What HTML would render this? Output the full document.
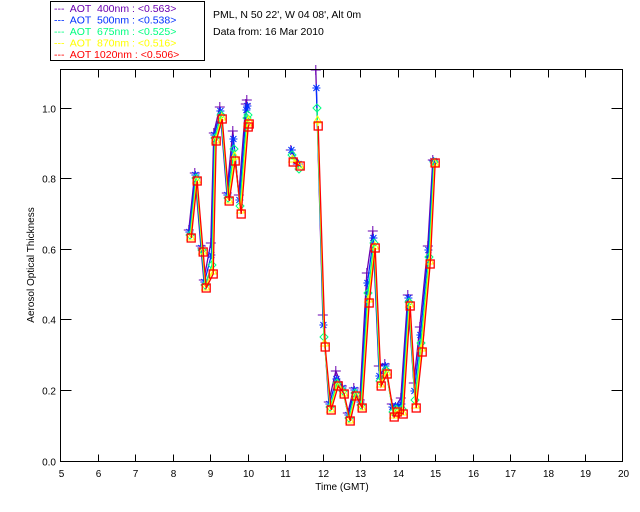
<!DOCTYPE html>
<html><head><meta charset="utf-8"><style>
body{margin:0;background:#fff;width:640px;height:512px;overflow:hidden;font-family:"Liberation Sans",sans-serif}
svg{position:absolute;left:0;top:0}
</style></head><body>
<svg id="s" width="640" height="512" xmlns="http://www.w3.org/2000/svg" font-family="Liberation Sans, sans-serif" font-size="10.5">
<rect x="50.5" y="1.5" width="154" height="59" fill="none" stroke="#000"/>
<g font-size="10.5">
<text x="54" y="12" fill="#6a00b0" xml:space="preserve">---  AOT  400nm : &lt;0.563&gt;</text>
<text x="54" y="23.5" fill="#0030ff" xml:space="preserve">---  AOT  500nm : &lt;0.538&gt;</text>
<text x="54" y="35" fill="#00ff80" xml:space="preserve">---  AOT  675nm : &lt;0.525&gt;</text>
<text x="54" y="46.5" fill="#ffff00" xml:space="preserve">---  AOT  870nm : &lt;0.516&gt;</text>
<text x="54" y="58" fill="#ff0000" xml:space="preserve">---  AOT 1020nm : &lt;0.506&gt;</text>
</g>
<text x="213" y="18" fill="#000">PML, N 50 22', W 04 08', Alt 0m</text>
<text x="213" y="35" fill="#000">Data from: 16 Mar 2010</text>
<g id="data"></g>
<g id="ax" stroke="#000" fill="none" stroke-width="1"></g>
<g id="lab" fill="#000" font-size="10"></g>
<text x="342" y="490" text-anchor="middle" font-size="10">Time (GMT)</text>
<text transform="translate(34,265) rotate(-90)" text-anchor="middle" font-size="10">Aerosol Optical Thickness</text>
</svg>
<script>
var ns="http://www.w3.org/2000/svg";
function el(p,t,a){var e=document.createElementNS(ns,t);for(var k in a)e.setAttribute(k,a[k]);p.appendChild(e);return e;}
var ax=document.getElementById('ax'),lab=document.getElementById('lab');
var L=60.5,R=622.5,T=69.5,B=461.5;
var d=document.getElementById('data');
var segs=[
[[190,238],[196,181],[202,252],[205,288],[212,274],[215,141],[221,119],[228,201],[234,161],[240,214],[247,127],[248,124]],
[[292,162],[299,166]],
[[317,126],[324,347],[330,410],[337,386],[343,394],[349,421],[355,396],[361,408],[368,303],[374,248],[380,386],[386,374],[393,417],[396,412],[402,414],[409,306],[415,408],[421,352],[429,264],[434,163]]];
// per-series manual y offsets (purple, blue, green, yellow)
var big={'0,2':[-6,-4,-2,-1],'0,6':[-12,-8,-4,-2],'0,9':[-19,-14,-8,-4],'0,10':[-23,-17,-9,-4],'0,11':[-24,-18,-9,-4],'0,4':[-31,-19,-9,-3],'0,8':[-30,-22,-12,-5],
'1,0':[-12,-12,-7,-3],'1,1':[-2,-2,3,-1],'2,0':[-60,-38,-18,-6],'2,1':[-32,-22,-10,-4],'2,3':[-15,-7,-3,-1],'2,9':[-17,-10,-5,-2],'2,8':[-30,-20,-10,-4],'2,10':[-20,-10,-5,-2],'2,11':[-10,-8,-4,-2],'2,14':[-16,-10,-5,-2],'2,15':[-11,-8,-4,-2],'2,12':[-13,-10,-5,-2],'2,13':[-4,-6,-3,-1],'2,16':[-25,-17,-8,-3],'2,17':[-25,-17,-9,-4],'2,18':[-18,-14,-7,-3],'2,19':[-3,-2,-1,0]};
var cols=['#6a00b0','#0030ff','#00ff80','#ffff00','#ff0000'];
var dflt=[-8,-6,-3,-1,0];
for(var c=0;c<5;c++){
 segs.forEach(function(s,si){
  var pts=s.map(function(p,i){var o=c==4?0:((big[si+','+i]||dflt)[c]);return [p[0]+(c-2)*0.6,Math.max(70,p[1]+o)];});
  el(d,'polyline',{points:pts.map(function(p){return p.join(',');}).join(' '),fill:'none',stroke:cols[c],'stroke-width':1.3});
  pts.forEach(function(p){var x=p[0],y=p[1],k=cols[c];
   if(c==0){el(d,'path',{d:'M'+(x-5)+' '+y+'h10M'+x+' '+(y-5)+'v10',stroke:k,fill:'none'});}
   else if(c==1){el(d,'path',{d:'M'+(x-4)+' '+y+'h8M'+x+' '+(y-4)+'v8M'+(x-3)+' '+(y-3)+'l6 6M'+(x+3)+' '+(y-3)+'l-6 6',stroke:k,fill:'none'});}
   else if(c==2){el(d,'path',{d:'M'+x+' '+(y-4)+'l4 4l-4 4l-4 -4z',stroke:k,fill:'none'});}
   else if(c==3){el(d,'path',{d:'M'+x+' '+(y-4)+'l4 7h-8z',stroke:k,fill:'none'});}
   else {el(d,'rect',{x:x-4,y:y-4,width:8,height:8,stroke:k,fill:'none','stroke-width':1.3});}
  });
 });
}
el(ax,'rect',{x:L,y:T,width:R-L,height:B-T});
for(var h=5;h<=20;h++){var x=L+(h-5)*(R-L)/15;x=Math.round(x)+0.5;
 if(h>5&&h<20){el(ax,'line',{x1:x,y1:B,x2:x,y2:B-7});el(ax,'line',{x1:x,y1:T,x2:x,y2:T+8});}
 var t=el(lab,'text',{x:x,y:477,'text-anchor':'middle'});t.textContent=h;}
var ys=[461,390,319,249,178,108];
ys.forEach(function(y,i){y+=0.5;
 if(i>0){el(ax,'line',{x1:L,y1:y,x2:L+11,y2:y});el(ax,'line',{x1:R,y1:y,x2:R-11,y2:y});}
 var t=el(lab,'text',{x:56,y:y+4,'text-anchor':'end'});t.textContent=(i*0.2).toFixed(1);});
</script>
</body></html>
